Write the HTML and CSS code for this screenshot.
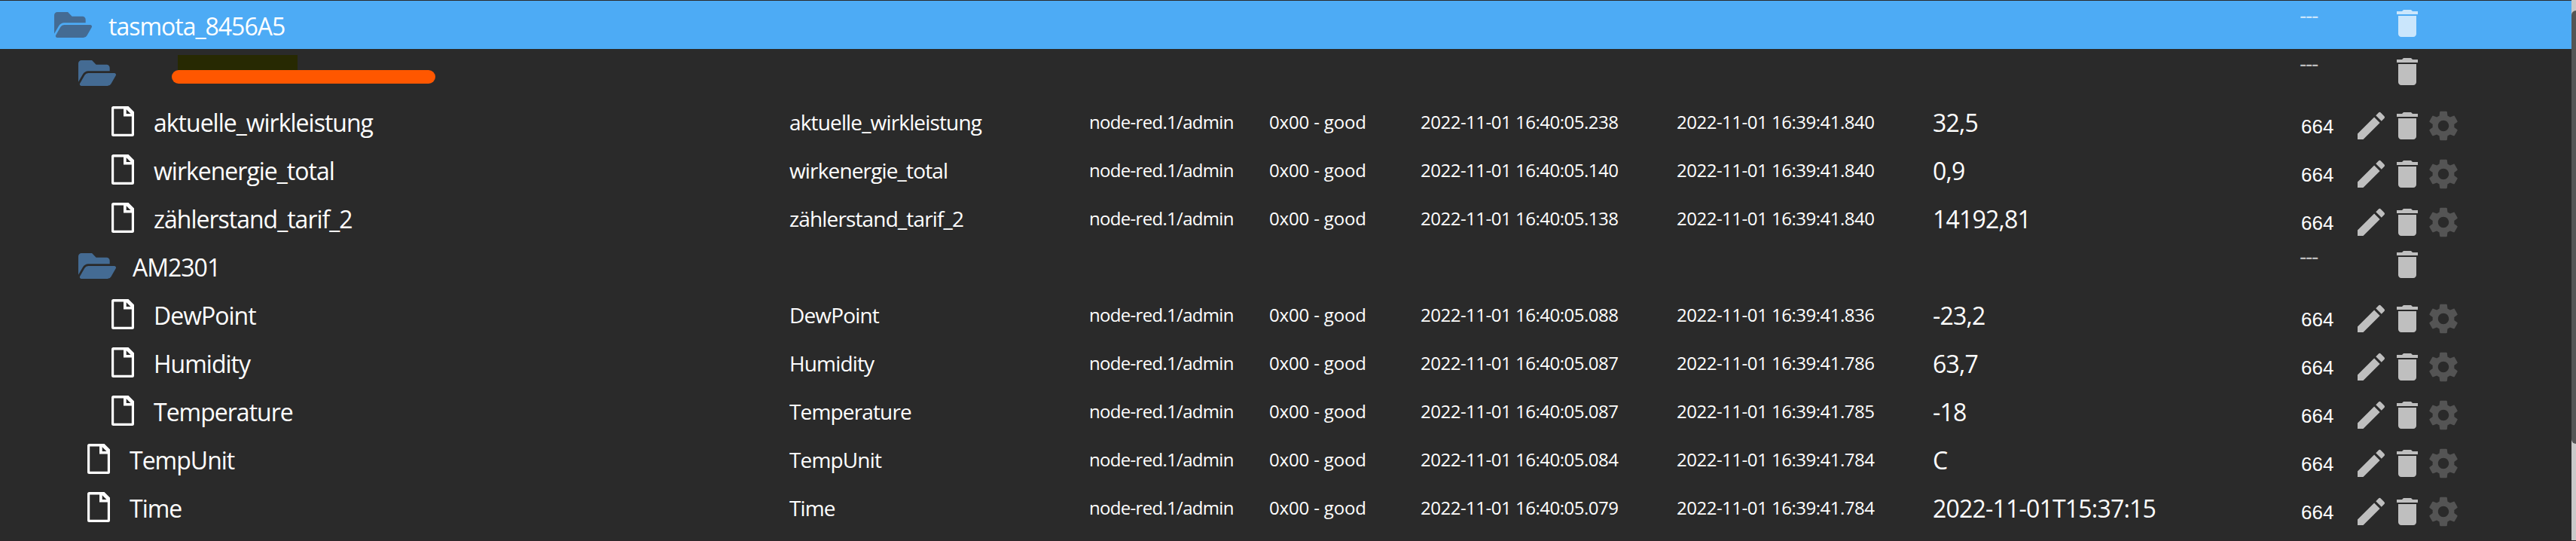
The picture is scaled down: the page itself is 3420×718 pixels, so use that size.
FILE: index.html
```html
<!DOCTYPE html>
<html lang="de">
<head>
<meta charset="UTF-8">
<title>Objekte</title>
<link rel="stylesheet" href="styles.css">
</head>
<body>
<svg class="defs">
    <symbol id="folder" viewBox="0 64 576 384" preserveAspectRatio="none"><path d="M572.694 292.093L500.27 416.248A63.997 63.997 0 0 1 444.989 448H45.025c-18.523 0-30.064-20.093-20.731-36.093l72.424-124.155A64 64 0 0 1 152 256h399.964c18.523 0 30.064 20.093 20.73 36.093zM152 224h328v-48c0-26.51-21.49-48-48-48H272l-64-64H48C21.49 64 0 85.49 0 112v278.046l69.077-118.418C86.214 242.25 117.989 224 152 224z"/></symbol>
    <symbol id="file" viewBox="0 0 30 40"><path fill-rule="evenodd" d="M2.500 0H22.500L30 7.500V37.500a2.500 2.500 0 0 1-2.500 2.500h-25A2.500 2.500 0 0 1 0 37.500v-35A2.500 2.500 0 0 1 2.500 0zM3.200 3.500V36.700H26.800V13.500H16V3.500zM19.700 4.200V10H25.500z"/></symbol>
    <symbol id="edit" viewBox="0 0 24 24"><path d="M3 17.25V21h3.75L17.81 9.94l-3.75-3.75L3 17.25zM20.71 7.04c.39-.39.39-1.02 0-1.41l-2.34-2.34a.9959.9959 0 0 0-1.41 0l-1.83 1.83 3.75 3.75 1.83-1.83z"/></symbol>
    <symbol id="trash" viewBox="0 0 24 24"><path d="M6 19c0 1.100.9 2 2 2h8c1.100 0 2-.9 2-2V7H6v12zM19 4h-3.500l-1-1h-5l-1 1H5v2h14V4z"/></symbol>
    <symbol id="gear" viewBox="0 0 24 24"><path d="M19.140 12.940c.04-.3.06-.61.06-.94 0-.32-.02-.64-.07-.94l2.030-1.580c.18-.14.23-.41.12-.61l-1.920-3.320c-.12-.22-.37-.29-.59-.22l-2.390.96c-.5-.38-1.030-.7-1.620-.94l-.36-2.540c-.04-.24-.24-.41-.48-.41h-3.840c-.24 0-.43.17-.47.41l-.36 2.540c-.59.24-1.130.57-1.620.94l-2.390-.96c-.22-.08-.47 0-.59.22L2.740 8.870c-.12.21-.08.47.12.61l2.030 1.580c-.05.3-.09.63-.09.94s.02.64.07.94l-2.030 1.580c-.18.14-.23.41-.12.61l1.920 3.320c.12.22.37.29.59.22l2.390-.96c.5.38 1.030.7 1.620.94l.36 2.540c.05.24.24.41.48.41h3.840c.24 0 .44-.17.47-.41l.36-2.540c.59-.24 1.130-.56 1.620-.94l2.390.96c.22.08.47 0 .59-.22l1.920-3.320c.12-.22.07-.47-.12-.61l-2.010-1.580zM12 15.600c-1.980 0-3.600-1.620-3.600-3.600s1.620-3.600 3.600-3.600 3.600 1.620 3.600 3.600-1.620 3.600-3.600 3.600z"/></symbol>
</svg>
<div class="browser">
    <div class="tree" id="tree"></div>
    <div class="scrollbar"><div class="thumb"></div></div>
</div>

<script>
    // level, name, changed, last change, value (folders have only level and name)
    const objects = [
        [0, "tasmota_8456A5"],
        [1, ""],
        [2, "aktuelle_wirkleistung", "16:40:05.238", "16:39:41.840", "32,5"],
        [2, "wirkenergie_total", "16:40:05.140", "16:39:41.840", "0,9"],
        [2, "zählerstand_tarif_2", "16:40:05.138", "16:39:41.840", "14192,81"],
        [1, "AM2301"],
        [2, "DewPoint", "16:40:05.088", "16:39:41.836", "-23,2"],
        [2, "Humidity", "16:40:05.087", "16:39:41.786", "63,7"],
        [2, "Temperature", "16:40:05.087", "16:39:41.785", "-18"],
        [1, "TempUnit", "16:40:05.084", "16:39:41.784", "C"],
        [1, "Time", "16:40:05.079", "16:39:41.784", "2022-11-01T15:37:15"]
    ];

    function icon(name) {
        return `<svg class="icon ${name}"><use href="#${name}"/></svg>`;
    }

    function folderRow(level, name) {
        const label = name ? `<span class="name">${name}</span>` : `<span class="redacted"><span class="marker"></span></span>`;
        return `<div class="row folder-row level-${level}${level === 0 ? " selected" : ""}">
            <div class="id">${icon("folder")}${label}</div>
            <div class="acl">---</div>
            <div class="buttons"><span class="spacer"></span>${icon("trash")}</div>
        </div>`;
    }

    function stateRow(level, name, changed, last, value) {
        return `<div class="row state-row level-${level}">
            <div class="id">${icon("file")}<span class="name">${name}</span></div>
            <div class="title">${name}</div>
            <div class="small from">node-red.1/admin</div>
            <div class="small quality">0x00 - good</div>
            <div class="small">2022-11-01 ${changed}</div>
            <div class="small">2022-11-01 ${last}</div>
            <div class="value">${value}</div>
            <div class="acl">664</div>
            <div class="buttons">${icon("edit")}${icon("trash")}${icon("gear")}</div>
        </div>`;
    }

    document.getElementById("tree").innerHTML = objects
        .map(o => o.length === 2 ? folderRow(...o) : stateRow(...o))
        .join("");
</script>
</body>
</html>
```

FILE: styles.css
```css
body {
    margin: 0;
    background-color: #2a2a2a;
    color: #fff;
    font-family: "Segoe UI", "Open Sans", "Noto Sans", sans-serif;
}
.defs {
    display: none;
}
.browser {
    display: flex;
    box-sizing: border-box;
    height: 718px;
    overflow: hidden;
    border-bottom: 1px solid #2e272a;
}
.tree {
    flex: 1;
    padding-top: 1px;
}
.row {
    display: grid;
    grid-template-columns: 1048px 398px 239px 201px 340px 340px 487px 71px 1fr;
    height: 64px;
    line-height: 67px;
    white-space: nowrap;
}
.selected {
    background-color: #4dabf5;
}
.id {
    display: flex;
    font-size: 32px;
    letter-spacing: -1px;
}
.icon {
    flex: none;
    width: 48px;
    height: 48px;
    fill: currentColor;
}
.folder {
    width: 50px;
    height: 34px;
    margin-top: 15px;
    margin-right: 22px;
    color: #446b93;
}
.file {
    width: 30px;
    height: 40px;
    margin-top: 12px;
    margin-right: 26px;
}
.folder-row.level-0 .id {
    padding-left: 72px;
}
.folder-row.level-1 .id {
    padding-left: 104px;
}
.state-row.level-1 .id {
    padding-left: 116px;
}
.state-row.level-2 .id {
    padding-left: 148px;
}
.redacted {
    width: 350px;
    height: 18px;
    margin: 28px 0 0 52px;
    border-radius: 9px;
    background-color: #ff5700;
}
.marker {
    display: block;
    width: 159px;
    height: 20px;
    margin: -20px 0 0 8px;
    background-color: #272902;
}
.title {
    font-size: 28px;
    letter-spacing: -0.85px;
    line-height: 66px;
}
.small {
    font-size: 24px;
    letter-spacing: -0.5px;
    line-height: 66px;
}
.from {
    letter-spacing: -0.7px;
}
.quality {
    letter-spacing: -0.15px;
}
.value {
    font-size: 32px;
    letter-spacing: -0.8px;
}
.acl {
    grid-column: 8;
    font-family: "Liberation Sans", Arial, sans-serif;
    font-size: 26px;
    padding-left: 2px;
    line-height: 78px;
}
.folder-row .acl {
    padding-left: 0;
    font-size: 28px;
    letter-spacing: -1.3px;
    line-height: 40px;
    opacity: 0.7;
}
.buttons {
    grid-column: 9;
    display: flex;
    padding-top: 14px;
    color: rgba(255, 255, 255, 0.7);
}
.folder-row .buttons {
    padding-top: 6px;
}
.spacer {
    width: 48px;
}
.gear {
    color: rgba(255, 255, 255, 0.2);
}
.scrollbar {
    width: 6px;
    background-color: #c9c9c9;
}
.thumb {
    height: 575px;
    margin-top: 14px;
    border-radius: 6px 0 0 6px;
    background-color: #555;
}
```
